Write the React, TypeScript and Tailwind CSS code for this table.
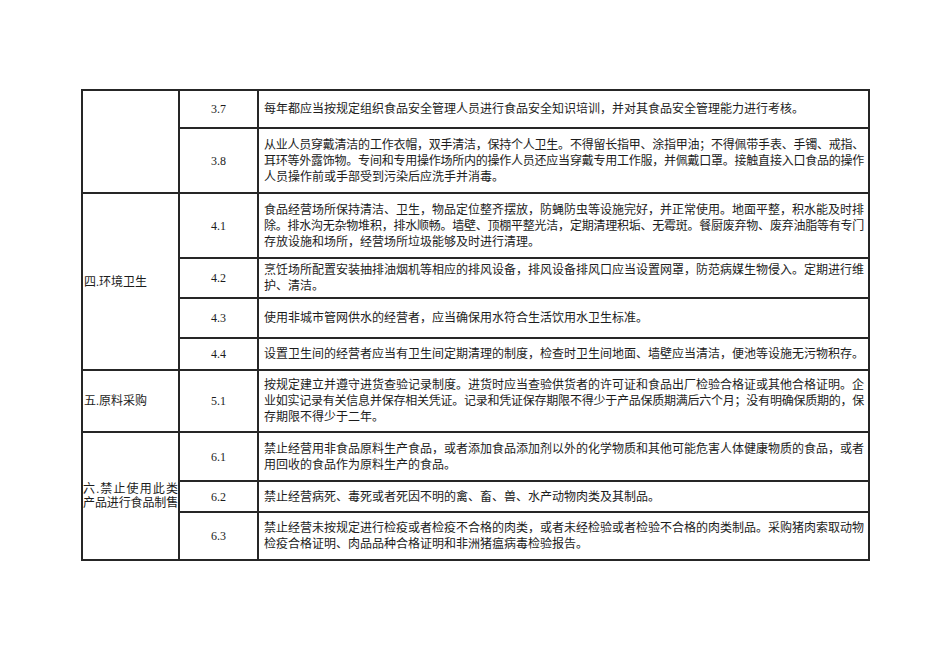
import React from "react";

type Row = { no: string; lines: string[] };

const W = 600;
const FS = 12;

function Line({ text, full, width = W }: { text: string; full: boolean; width?: number }) {
  if (!full) {
    return <div className="whitespace-nowrap">{text}</div>;
  }
  const n = Array.from(text).length;
  const ls = (width - n * FS) / n;
  return (
    <div className="whitespace-nowrap" style={{ letterSpacing: `${ls}px` }}>
      {text}
    </div>
  );
}

function NoCell({ no }: { no: string }) {
  return <div className="bg-white flex items-center justify-center text-[12px]">{no}</div>;
}

function Content({ lines }: { lines: string[] }) {
  return (
    <div className="bg-white flex flex-col justify-center pl-[5px] text-[12px] leading-[16px]">
      {lines.map((l, i) => (
        <Line key={i} text={l} full={lines.length > 1 && i < lines.length - 1} />
      ))}
    </div>
  );
}

const r37: Row = { no: "3.7", lines: ["每年都应当按规定组织食品安全管理人员进行食品安全知识培训，并对其食品安全管理能力进行考核。"] };
const r38: Row = {
  no: "3.8",
  lines: [
    "从业人员穿戴清洁的工作衣帽，双手清洁，保持个人卫生。不得留长指甲、涂指甲油；不得佩带手表、手镯、戒指、",
    "耳环等外露饰物。专间和专用操作场所内的操作人员还应当穿戴专用工作服，并佩戴口罩。接触直接入口食品的操作",
    "人员操作前或手部受到污染后应洗手并消毒。",
  ],
};
const r41: Row = {
  no: "4.1",
  lines: [
    "食品经营场所保持清洁、卫生，物品定位整齐摆放，防蝇防虫等设施完好，并正常使用。地面平整，积水能及时排",
    "除。排水沟无杂物堆积，排水顺畅。墙壁、顶棚平整光洁，定期清理积垢、无霉斑。餐厨废弃物、废弃油脂等有专门",
    "存放设施和场所，经营场所垃圾能够及时进行清理。",
  ],
};
const r42: Row = {
  no: "4.2",
  lines: [
    "烹饪场所配置安装抽排油烟机等相应的排风设备，排风设备排风口应当设置网罩，防范病媒生物侵入。定期进行维",
    "护、清洁。",
  ],
};
const r43: Row = { no: "4.3", lines: ["使用非城市管网供水的经营者，应当确保用水符合生活饮用水卫生标准。"] };
const r44: Row = {
  no: "4.4",
  lines: ["设置卫生间的经营者应当有卫生间定期清理的制度，检查时卫生间地面、墙壁应当清洁，便池等设施无污物积存。"],
};
const r51: Row = {
  no: "5.1",
  lines: [
    "按规定建立并遵守进货查验记录制度。进货时应当查验供货者的许可证和食品出厂检验合格证或其他合格证明。企",
    "业如实记录有关信息并保存相关凭证。记录和凭证保存期限不得少于产品保质期满后六个月；没有明确保质期的，保",
    "存期限不得少于二年。",
  ],
};
const r61: Row = {
  no: "6.1",
  lines: [
    "禁止经营用非食品原料生产食品，或者添加食品添加剂以外的化学物质和其他可能危害人体健康物质的食品，或者",
    "用回收的食品作为原料生产的食品。",
  ],
};
const r62: Row = { no: "6.2", lines: ["禁止经营病死、毒死或者死因不明的禽、畜、兽、水产动物肉类及其制品。"] };
const r63: Row = {
  no: "6.3",
  lines: [
    "禁止经营未按规定进行检疫或者检疫不合格的肉类，或者未经检验或者检验不合格的肉类制品。采购猪肉索取动物",
    "检疫合格证明、肉品品种合格证明和非洲猪瘟病毒检验报告。",
  ],
};

function Pair({ r }: { r: Row }) {
  return (
    <>
      <NoCell no={r.no} />
      <Content lines={r.lines} />
    </>
  );
}

export default function App() {
  return (
    <div className="w-[950px] h-[672px] bg-white overflow-hidden font-['Liberation_Serif','Noto_Sans_CJK_SC',serif] text-[#1c1c1c] [text-spacing-trim:space-all]">
      <div className="ml-[81px] mt-[89px] w-fit grid grid-cols-[95px_77px_609px] grid-rows-[36px_63px_63px_38px_38px_30px_60px_47px_29px_46px] gap-[2px] p-[2px] bg-[#262626]">
        <div className="bg-white row-span-2 col-start-1" />
        <Pair r={r37} />
        <Pair r={r38} />
        <div className="bg-white row-span-4 col-start-1 flex items-center pl-[1px] text-[12px]">四.环境卫生</div>
        <Pair r={r41} />
        <Pair r={r42} />
        <Pair r={r43} />
        <Pair r={r44} />
        <div className="bg-white col-start-1 flex items-center pl-[1px] text-[12px]">五.原料采购</div>
        <Pair r={r51} />
        <div className="bg-white row-span-3 col-start-1 flex flex-col justify-center text-[12px] leading-[14px]">
          <div className="w-[95px] text-justify [text-align-last:justify] whitespace-nowrap">六.禁止使用此类</div>
          <Line text="产品进行食品制售" full width={95} />
        </div>
        <Pair r={r61} />
        <Pair r={r62} />
        <Pair r={r63} />
      </div>
    </div>
  );
}
